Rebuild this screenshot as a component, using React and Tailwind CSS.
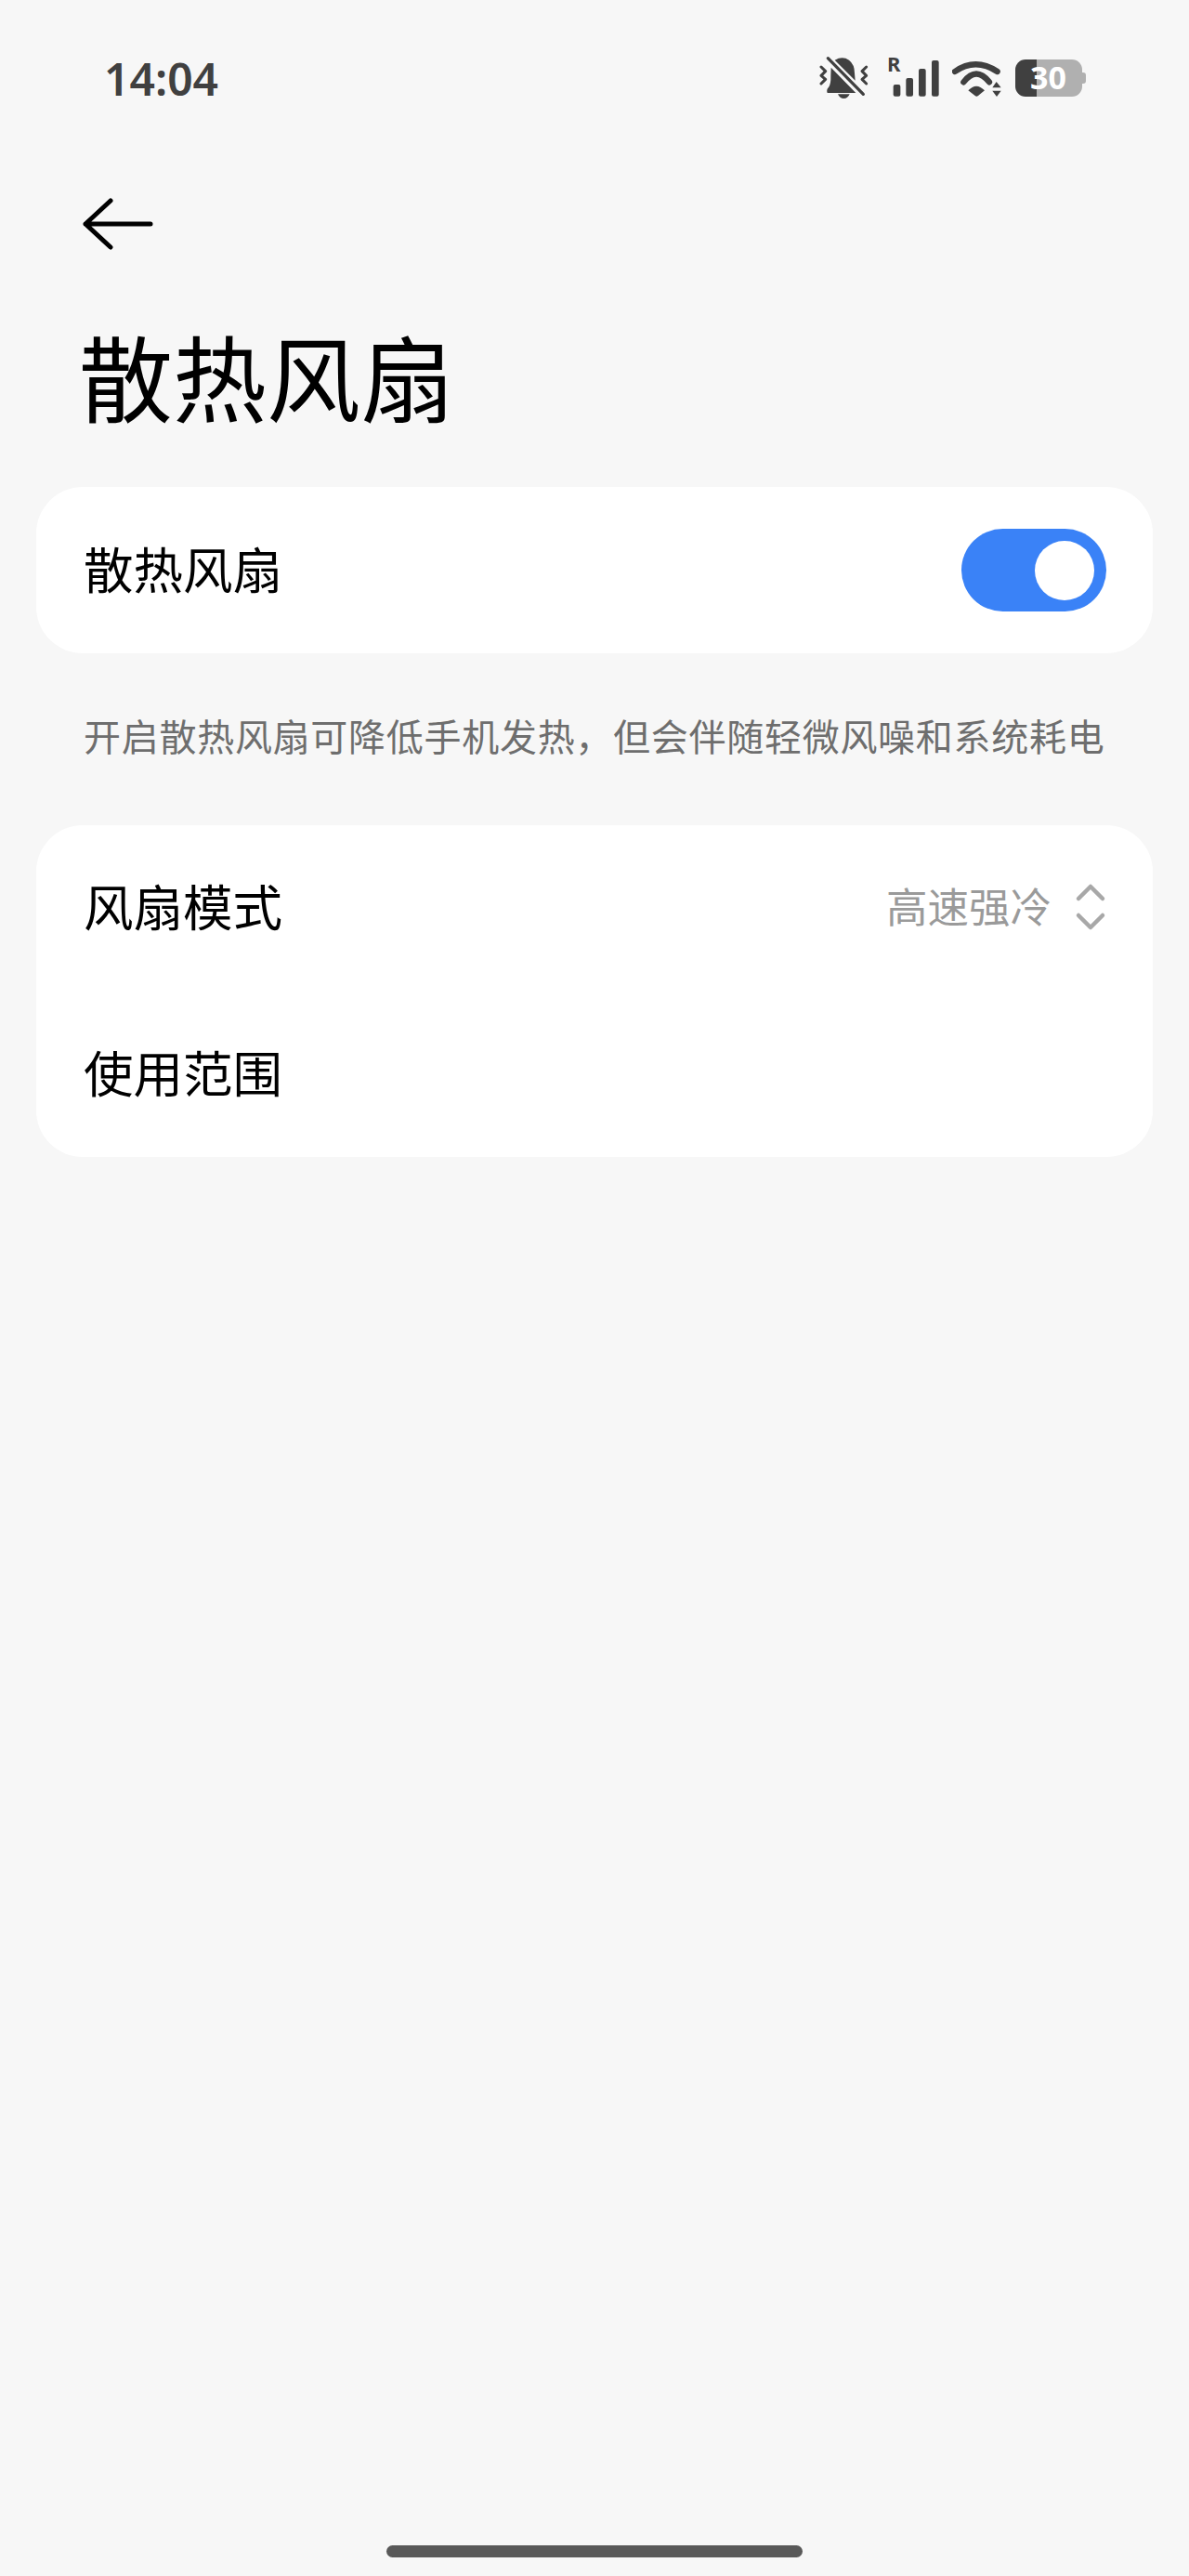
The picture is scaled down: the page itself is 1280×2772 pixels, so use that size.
import React from "react";

const cjk = { fontFamily: '"Noto Sans CJK SC", "Noto Sans", sans-serif' };

function Bell() {
  return (
    <svg width="54" height="50" viewBox="0 0 162 150" className="block">
      <path d="M50 14 Q75 0 96 14 Q114 28 114 56 L116 80 Z" fill="#404040" />
      <path d="M38 38 L118 120 L26 120 Q22 110 30 102 Q38 90 37 65 Z" fill="#404040" />
      <path d="M60 124 L98 124 Q92 138 79 138 Q66 138 60 124 Z" fill="#404040" />
      <path d="M28 8 L142 124" stroke="#404040" strokeWidth="10" strokeLinecap="round" />
      <path d="M6 36 L20 50 L6 64 L20 76 L6 90" fill="none" stroke="#404040" strokeWidth="9" strokeLinecap="round" strokeLinejoin="round" />
      <path d="M152 36 L138 50 L152 64 L138 76 L152 90" fill="none" stroke="#404040" strokeWidth="9" strokeLinecap="round" strokeLinejoin="round" />
    </svg>
  );
}

function Signal() {
  return (
    <div className="relative w-[56px] h-[44px]">
      <span className="absolute left-[-1px] top-[-4px] text-[22px] leading-[24px] font-bold text-[#404040]" style={{ fontFamily: '"Noto Sans", sans-serif' }}>R</span>
      <svg width="56" height="44" viewBox="0 0 168 132" className="block absolute left-0 top-0">
        <rect x="17" y="93" width="23" height="38" rx="6" fill="#404040" />
        <rect x="58" y="72" width="23" height="59" rx="6" fill="#404040" />
        <rect x="99" y="42" width="23" height="89" rx="6" fill="#404040" />
        <rect x="141" y="15" width="23" height="116" rx="6" fill="#404040" />
      </svg>
    </div>
  );
}

function Wifi() {
  return (
    <svg width="55" height="38" viewBox="0 0 165 114" className="block">
      <path d="M9 33 Q75 -13 146 33" fill="none" stroke="#404040" strokeWidth="19" strokeLinecap="round" />
      <path d="M37 67 Q78 14 120 67" fill="none" stroke="#404040" strokeWidth="19" strokeLinecap="round" />
      <path d="M52 94 Q78 66 105 94 L84 111 Q79 115 74 111 Z" fill="#404040" />
      <path d="M143 66 L130 85 L158 85 Z" fill="#404040" />
      <path d="M130 95 L158 95 L144 114 Z" fill="#404040" />
    </svg>
  );
}

function Battery() {
  return (
    <div className="relative flex w-[76px] h-[40px]">
      <div className="w-[23px] h-full bg-[#404040] rounded-l-[11px]" />
      <div className="w-[49px] h-full bg-[#b0b0b0] rounded-r-[11px]" />
      <div className="w-[4px] h-[12px] self-center bg-[#b0b0b0] rounded-r-[3px]" />
      <span className="absolute left-[16px] top-[-3px] text-[34px] leading-[44px] font-bold text-white" style={{ fontFamily: '"Noto Sans", sans-serif' }}>30</span>
    </div>
  );
}

function Toggle() {
  return (
    <div className="w-[156px] h-[89px] rounded-full bg-[#3a82f7] flex items-center justify-end pr-[13px]">
      <div className="w-[64px] h-[64px] rounded-full bg-white" />
    </div>
  );
}

function Updown() {
  return (
    <svg width="34" height="52" viewBox="0 0 34 52" className="block">
      <path d="M4 17 L17 4 L30 17" fill="none" stroke="#a8a8a8" strokeWidth="4.5" strokeLinecap="round" strokeLinejoin="round" />
      <path d="M4 35 L17 48 L30 35" fill="none" stroke="#a8a8a8" strokeWidth="4.5" strokeLinecap="round" strokeLinejoin="round" />
    </svg>
  );
}

export default function App() {
  return (
    <div className="w-[1280px] h-[2772px] bg-[#f7f7f7] flex flex-col overflow-hidden" style={cjk}>
      <div className="h-[170px] shrink-0 flex items-start justify-between pl-[112px] pr-[111px] pt-[52px]">
        <span className="text-[48px] leading-[66px] font-semibold text-[#404040]" style={{ fontFamily: '"Noto Sans", sans-serif' }}>14:04</span>
        <div className="flex items-start mt-[8px]">
          <Bell />
          <div className="ml-[20px]"><Signal /></div>
          <div className="ml-[13px] mt-[6px]"><Wifi /></div>
          <div className="ml-[13px] mt-[4px]"><Battery /></div>
        </div>
      </div>

      <div className="h-[130px] shrink-0 pl-[89px] pt-[43px]">
        <svg width="78" height="56" viewBox="0 0 78 56" className="block">
          <path d="M30 3 L3 28 L30 53 M3 28 L73 28" fill="none" stroke="#000" strokeWidth="5" strokeLinecap="round" strokeLinejoin="round" />
        </svg>
      </div>

      <h1 className="h-[110px] mt-[48px] shrink-0 pl-[85px] text-[101px] leading-[110px] font-normal text-black">散热风扇</h1>

      <div className="mx-[39px] mt-[66px] h-[179px] shrink-0 rounded-[50px] bg-white flex items-center justify-between pl-[51px] pr-[50px]">
        <span className="text-[53.5px] leading-[70px] mb-[6px] text-black">散热风扇</span>
        <Toggle />
      </div>

      <p className="mt-[58px] pl-[90px] text-[40px] leading-[60px] tracking-[0.72px] text-[#6e6e6e] whitespace-nowrap">{"开启散热风扇可降低手机发热\uFF0C但会伴随轻微风噪和系统耗电"}</p>

      <div className="mx-[39px] mt-[67px] shrink-0 rounded-[50px] bg-white flex flex-col">
        <div className="h-[178px] flex items-center justify-between pl-[51px] pr-[50px]">
          <span className="text-[53.5px] leading-[70px] mb-[6px] text-black">风扇模式</span>
          <div className="flex items-center gap-[25px] mb-[3px]">
            <span className="text-[44.5px] leading-[60px] mb-[3px] text-[#9a9a9a]">高速强冷</span>
            <Updown />
          </div>
        </div>
        <div className="h-[179px] flex items-center pl-[51px] pr-[50px]">
          <span className="text-[53.5px] leading-[70px] mb-[6px] text-black">使用范围</span>
        </div>
      </div>

      <div className="mt-auto mb-[20px] mx-auto w-[448px] h-[13px] rounded-full bg-[#595959]" />
    </div>
  );
}
